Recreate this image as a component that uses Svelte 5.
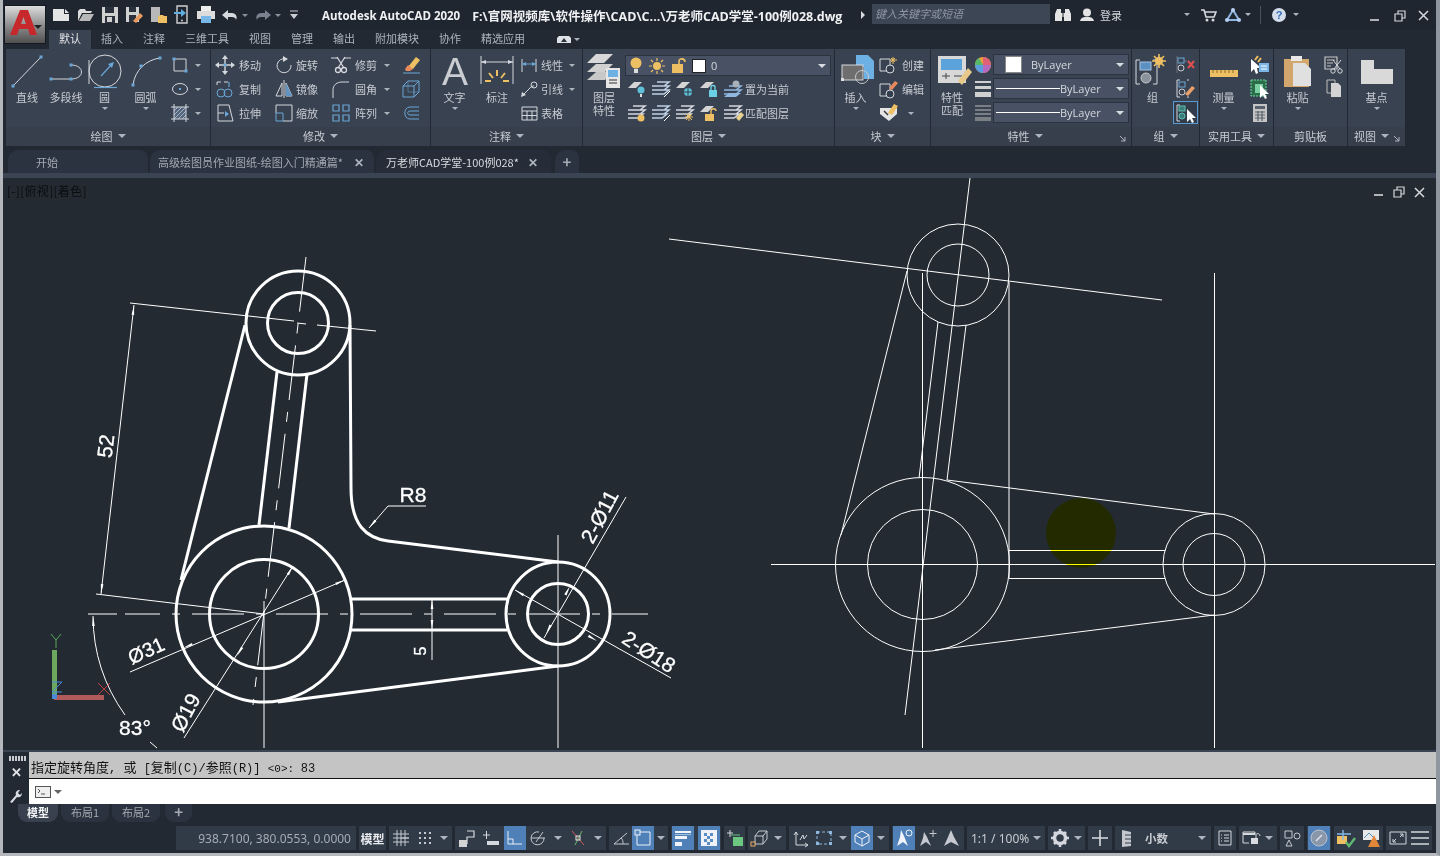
<script>
  const L = "#d5d8dd";
  const G = "#c9ccd1";
  const B = "#6aa6d6";
  const Y = "#eec063";

  const sq = (x, y, c = B) => `<rect x="${x - 1.5}" y="${y - 1.5}" width="3" height="3" fill="${c}"/>`;
  const st = (d, c = L, w = 1) => `<path d="${d}" fill="none" stroke="${c}" stroke-width="${w}"/>`;
  const fl = (d, c = L) => `<path d="${d}" fill="${c}"/>`;

  // name: [width, height, svg content]
  const icons = {
    line: [40, 36, st("M6 32 34 3") + sq(6, 32) + sq(34, 3)],
    pline: [40, 36, st("M5 25H25") + st("M25 11C39 11 39 25 25 25") + sq(5, 25) + sq(25, 25) + sq(25, 11)],
    circle: [40, 36, `<circle cx="20" cy="17" r="16" fill="none" stroke="${L}"/>` + st("M4 6V30", L) + st("M9 33.5H32", B, 1.2) + st("M16 22 27 10", B, 1.2) + fl("M29 8 23 10 27 14z", B)],
    arc: [40, 36, st("M7 31C9 16 20 6 34 4") + sq(7, 31) + sq(15, 12) + sq(34, 4)],
    rect: [18, 18, st("M3 3H15V15H3z") + sq(3, 3) + sq(15, 15, B)],
    poly: [18, 18, `<ellipse cx="9" cy="9" rx="7.5" ry="5.5" fill="none" stroke="${L}"/><rect x="8" y="8" width="2" height="2" fill="${B}"/>`],
    hatch: [18, 18, `<rect x="3" y="3" width="12" height="12" fill="#56657a"/>` + st("M3 7 7 3M3 11 11 3M3 15 15 3M7 15 15 7M11 15 15 11", "#9fb6cc") + st("M3 0V18M15 0V18M0 3H18M0 15H18")],
    move: [20, 20, st("M10 2V18M2 10H18", L, 1.4) + fl("M10 0 13 4H7zM10 20 7 16H13zM0 10 4 7V13zM20 10 16 13V7z") + `<rect x="8.5" y="8.5" width="3" height="3" fill="${B}"/>`],
    rotate: [20, 20, st("M12 4A7 7 0 1 0 17 10") + fl("M9 1 14 4 9 7z")],
    trim: [22, 20, st("M1 3H8M14 3H21", L) + st("M7 2 14 13M15 2 8 13", L, 1.3) + `<circle cx="8" cy="15" r="2.5" fill="none" stroke="${L}" stroke-width="1.3"/><circle cx="14" cy="15" r="2.5" fill="none" stroke="${L}" stroke-width="1.3"/>`],
    copy: [20, 20, st("M2 3H6M2 3V6M13 3H9") + st("M14 3V8", B, 1.2) + `<circle cx="6" cy="14" r="4" fill="none" stroke="${B}"/><circle cx="13" cy="14" r="4" fill="none" stroke="${B}"/>`],
    mirror: [20, 20, st("M8 4 2 17H8zM12 4V17H18z") + fl("M12 4V17H18z", "#5f93c2") + st("M10 1V19", L)],
    fillet: [20, 20, st("M2 19V11C2 6 6 3 11 3H18")],
    stretch: [20, 20, st("M3 2H14L18 18H3z") + st("M3 10H9") + fl("M14 11 10 8V14z", B)],
    scale: [20, 20, st("M2 2H18V18H9") + st("M2 2V10") + st("M2 10H9V18H2z", B)],
    array: [20, 20, st("M2 2H8V8H2zM12 2H18V8H12zM2 12H8V18H2zM12 12H18V18H12z", B, 1.2)],
    erase: [20, 20, `<path d="M7 12 15 2 19 5 12 14z" fill="${Y}"/><path d="M4 14 7 10 12 14 9 16H5z" fill="#e88a5c"/>` + st("M2 18H19", B)],
    solid: [20, 20, st("M2 7H13V18H2zM2 7 7 2H18V13L13 18M13 7 18 2", B) + st("M7 2V13H18", B, .5)],
    offset: [20, 20, st("M18 4H9C2 4 2 16 9 16H18", B) + st("M18 8H9C6 8 6 12 9 12H18", B)],
    atext: [36, 36, `<text x="18" y="31" text-anchor="middle" font-family="Liberation Sans" font-size="39" fill="${G}">A</text>`],
    adim: [36, 36, st("M2 2V30M34 2V30") + st("M2 8H34") + fl("M2 8 7 6V10zM34 8 29 6V10z") + st("M18 16V22M10 19 14 24M26 19 22 24M6 27H12M24 27H30", Y, 2)],
    linear: [20, 20, st("M3 4V17M17 4V17") + st("M3 9H17", B) + fl("M3 9 7 7V11zM17 9 13 7V11z", B)],
    leader: [20, 20, st("M3 17 11 9C12 7 14 7 15 7", L) + `<circle cx="15" cy="6" r="3" fill="none" stroke="${L}"/>` + fl("M2 18 3 13 7 16z")],
    table: [20, 20, st("M3 4H18V17H3zM3 8H18M3 12.5H18M8 8V17M13 8V17")],
    layers: [34, 34, fl("M9 0H26L17 9H0z", "#d8d8d8") + fl("M9 10H26L18 18H0z", "#d0d0d0") + fl("M9 18H26L18 26H0z", "#c8c8c8")
      + `<rect x="19" y="14" width="14" height="20" fill="#e6e6e6"/><rect x="21" y="16" width="10" height="7" fill="#6cb0e4"/>` + st("M22 26H30M22 29H30", "#333")],
    bulb: [14, 18, `<circle cx="7" cy="6" r="5.5" fill="${Y}"/><rect x="5" y="12" width="4" height="4" fill="#ddd"/>`],
    sun: [18, 18, `<circle cx="9" cy="9" r="4" fill="${Y}"/>` + st("M9 1V4M9 14V17M1 9H4M14 9H17M3 3 5 5M13 13 15 15M15 3 13 5M3 15 5 13", Y, 1.2)],
    lockOpen: [16, 18, `<rect x="1" y="7" width="11" height="9" fill="${Y}"/>` + st("M8 7V4C8 1 14 1 14 5", Y, 1.6)],
    lay1: [20, 18, fl("M6 2H14L8 8H0z", "#d4d4d4") + `<circle cx="13" cy="10" r="3.5" fill="#5fc0d8"/><rect x="12" y="14" width="2" height="3" fill="#ddd"/>`],
    lay2: [20, 18, st("M5 2H17L12 6H0M5 6H17L12 10H0M5 10H17L12 14H0", "#bfd0e4", 1.5) + st("M18 11 12 17", "#fff")],
    lay3: [20, 18, fl("M6 2H14L8 8H0z", "#d4d4d4") + `<circle cx="12" cy="12" r="4" fill="#5fc0d8"/>` + st("M12 8V16M8 12H16", "#2f3a48")],
    lay4: [20, 18, fl("M6 2H14L8 8H0z", "#d4d4d4") + `<rect x="9" y="10" width="8" height="7" fill="#6ad0e4"/>` + st("M11 10V7C11 5 15 5 15 7V10", "#6ad0e4", 1.4)],
    lay5: [20, 18, st("M5 6H17L12 10H0M5 10H17L12 14H0", "#8fb8e0", 1.5) + fl("M5 13H17L12 17H0z", "#8fb8e0") + `<circle cx="12" cy="4" r="3.5" fill="#a8b0ba"/>`],
    lay6: [20, 18, st("M5 2H17L12 6H0M5 6H17L12 10H0M5 10H15L10 14H0", L, 1.5) + `<circle cx="13" cy="14" r="3.5" fill="${Y}"/>`],
    lay7: [20, 18, st("M5 2H17L12 6H0M5 6H17L12 10H0M5 10H15L10 14H0", "#bfd0e4", 1.5) + st("M12 17 18 11", "#fff")],
    lay8: [20, 18, st("M5 2H17L12 6H0M5 6H17L12 10H0M5 10H15L10 14H0", L, 1.5) + st("M13 9V17M9 13H17M10 10 16 16M16 10 10 16", Y)],
    lay9: [20, 18, fl("M6 2H14L8 8H0z", "#d4d4d4") + `<rect x="5" y="10" width="9" height="7" fill="${Y}"/>` + st("M11 10V7C11 4 16 4 16 7", Y, 1.4)],
    lay10: [20, 18, st("M5 2H17L12 6H0M5 6H17L12 10H0M5 10H15L10 14H0", L, 1.5) + `<path d="M12 14 17 8 20 11 15 17z" fill="#e8d090"/>`],
    insert: [36, 30, fl("M18 1H30L36 7V25H26V13H18z", "#6cb0e4") + `<rect x="4" y="11" width="21" height="15" fill="#6e6e6e" stroke="${L}"/><circle cx="24" cy="23" r="6.5" fill="none" stroke="#c8c8c8"/><rect x="3" y="24" width="3" height="3" fill="#ddd"/>`],
    create: [22, 20, st("M2 4H12V16H2z", L) + `<circle cx="12" cy="14" r="4" fill="#343e4c" stroke="${L}"/>` + st("M15 2V9M12 5H19M13 3 17 7M17 3 13 7", Y)],
    edit: [22, 20, st("M2 5H12V17H2z", L) + `<circle cx="12" cy="15" r="4" fill="#343e4c" stroke="${L}"/>` + `<path d="M11 9 17 2 20 4 14 11z" fill="#e88a5c"/>`],
    attr: [20, 20, `<path d="M1 5H18V11L10 18 1 11z" fill="#e4e4e4"/>` + `<path d="M9 10 15 1 19 3 13 12z" fill="${Y}"/>` + st("M5 8 9 12", "#333", 1.5)],
    match: [44, 34, `<rect x="8" y="2" width="28" height="27" fill="#d8d8d8"/><rect x="11" y="5" width="21" height="11" fill="#5ca3dc"/>` + st("M12 22H20M24 22H32M16 19V25", "#444") + `<path d="M28 27 38 14 42 18 32 31z" fill="#e8c98a"/>`],
    wheel: [18, 18, `<circle cx="9" cy="9" r="8" fill="#e8a03c"/><path d="M9 9V1A8 8 0 0 1 17 9z" fill="#e0607a"/><path d="M9 9H17A8 8 0 0 1 9 17z" fill="#b66ac0"/><path d="M9 9V17A8 8 0 0 1 1 9z" fill="#5a9de0"/><path d="M9 9H1A8 8 0 0 1 5 2z" fill="#58b86a"/>`],
    weight: [18, 18, fl("M1 1H17V3H1zM1 6H17V9H1zM1 12H17V17H1z", "#d0d0d0")],
    ltype: [18, 18, st("M1 2H17M1 6H17M1 10H17M1 14H17M1 16H17", "#bcbcbc", 1.1)],
    group: [36, 36, st("M5 6H1V30H5M18 6H22V30H18") + `<rect x="5" y="8" width="11" height="8" fill="#5c8fc2" stroke="#a8c4e0"/><circle cx="11" cy="24" r="5" fill="#8a929c" stroke="#c8c8c8"/>` + st("M24 0V14M17 7H31M19 2 29 12M29 2 19 12", Y, 1.6) + `<circle cx="24" cy="7" r="4" fill="${Y}"/>`],
    ungroup: [20, 20, `<rect x="2" y="3" width="6" height="5" fill="none" stroke="${B}"/><circle cx="5" cy="13" r="3" fill="none" stroke="${G}"/>` + st("M11 6H8M1 1V18", "#8a929c", .6) + st("M12 6 18 13M18 6 12 13", "#e05050", 2)],
    gedit: [20, 20, st("M4 1H1V18H4M11 1H13M11 18H13") + `<rect x="3" y="3" width="6" height="5" fill="none" stroke="${B}"/><circle cx="6" cy="13" r="3" fill="none" stroke="${G}"/><path d="M9 15 16 7 19 9 12 17z" fill="#e8a06a"/>`],
    gsel: [20, 20, st("M4 2H1V18H4") + `<rect x="3" y="3" width="6" height="5" fill="#3d7c7a" stroke="#5ec0b0"/><circle cx="6" cy="13" r="3" fill="#3d7c7a" stroke="#5ec0b0"/>` + fl("M11 6V19L14 16 16 20 18 19 16 15H20z", "#fff")],
    measure: [30, 26, `<g transform="translate(0 13)"><rect x="1" y="3" width="28" height="7" fill="${Y}"/>` + st("M4 3V6M8 3V6M12 3V6M16 3V6M20 3V6M24 3V6", "#8a6a2a") + `</g>`],
    quick: [20, 20, fl("M1 4V17L4 14 6 19 8 18 7 13H11z", "#fff") + st("M8 1 5 5M11 3 8 7", Y, 2) + `<rect x="9" y="8" width="10" height="9" fill="#7ab6e8"/>` + st("M11 11H17M11 14H17", "#fff")],
    select: [20, 20, `<rect x="1" y="1" width="15" height="16" fill="#2c6c4a" stroke="#6adc9a" stroke-dasharray="2 1"/><rect x="5" y="5" width="8" height="9" fill="#7ad0a0"/>` + fl("M10 6V19L13 16 15 20 17 19 15 15H19z", "#fff")],
    calc: [16, 20, `<rect x="1" y="1" width="14" height="18" fill="#c4c4c4"/><rect x="3" y="3" width="10" height="3" fill="#5a626e"/>` + st("M3 9H13M3 12H13M3 15H13M6 8V18M10 8V18", "#5a626e", 1.2)],
    paste: [30, 36, `<g transform="translate(0 1)">` + fl("M1 4H26V32H1z", "#d3a66e") + fl("M8 1H19V6H8z", "#e8e8e8") + fl("M10 8H22L28 14V31H10z", "#e0e0e0") + `</g>`],
    cut: [20, 20, st("M1 2H13V14H1zM3 5H11M3 8H9M3 11H7", "#c6c6c6", 1.2) + st("M9 5 16 14M17 5 10 14", L) + `<circle cx="9" cy="16" r="2.2" fill="none" stroke="${L}"/><circle cx="16" cy="16" r="2.2" fill="none" stroke="${L}"/>`],
    copyc: [18, 20, st("M2 1H10V14H2z", "#bdbdbd") + fl("M6 4H13L16 7V18H6z", "#d4d4d4")],
    base: [34, 32, fl("M1 6H14V15H33V30H1z", "#d9d9d9")],
    launch: [8, 8, st("M1 1 6 6M6 2V6H2", "#aeb4bd")],
    fnew: [18, 14, fl("M0 1H11V6H16V13H0z", "#e4e4e4") + fl("M12 1 16 5H12z", "#e4e4e4")],
    fopen: [18, 14, fl("M1 3 3 1H8L9 3H15L14 5H5L1 13z", "#dcdcdc") + fl("M6 6H17L13 13H2z", "#b8b8b8")],
    fsave: [18, 18, fl("M1 1H17V17H1z", "#d0d0d0") + fl("M4 1H13V7H4z", "#2a313d") + fl("M4 10H14V17H4z", "#2a313d") + fl("M6 11H11V16H6z", "#d0d0d0")],
    fsaveas: [18, 18, fl("M1 1H14V16H1z", "#d0d0d0") + fl("M4 1H11V6H4z", "#2a313d") + fl("M4 9H11V16H4z", "#2a313d") + `<path d="M8 15 15 7 18 10 11 17z" fill="#e89a60"/>`],
    fplot: [18, 18, fl("M2 1H11V16H2z", "#b8b8b8") + fl("M9 11 11 9H14L15 10H18V17H9z", Y)],
    fpub: [18, 20, st("M4 1H14V18H4z", "#cfcfcf", 1.4) + st("M1 8H9", "#60aee0", 2) + fl("M8 4 13 8 8 12z", "#60aee0") + `<circle cx="9" cy="15.5" r="1" fill="#ccc"/>`],
    fprint: [20, 18, fl("M5 0H15V5H5z", "#eee") + fl("M1 5H19V13H1z", "#dcdcdc") + fl("M5 10H15V17H5z", "#78b8e8")],
    undo: [18, 12, fl("M7 1 1 6 7 11V8H11C13 8 15 9 15 11 17 7 14 4 11 4H7z", L)],
    redo: [18, 12, fl("M11 1 17 6 11 11V8H7C5 8 3 9 3 11 1 7 4 4 7 4H11z", "#7a8290")],
    custom: [10, 10, st("M1 1H9", G) + fl("M1 4H9L5 9z", G)],
    binoc: [16, 14, fl("M2 1H6V5H7V13H0V6zM10 1H14L16 6V13H9V5H10z", "#e4e4e4") + fl("M7 5H9V9H7z", "#888")],
    user: [16, 14, `<circle cx="8" cy="4.5" r="4" fill="#e4e4e4"/>` + fl("M1 13C2 9 5 9 8 9 11 9 14 9 15 13z", "#e4e4e4")],
    cart: [16, 14, st("M0 2H3L5 9H13L15 4H4", L, 1.6) + `<circle cx="6" cy="12" r="1.5" fill="${L}"/><circle cx="12" cy="12" r="1.5" fill="${L}"/>`],
    tri: [16, 14, st("M8 2 2 12H14z", "#8fb4e2", 2) + `<circle cx="8" cy="2" r="2" fill="#b5cff0"/><circle cx="2" cy="12" r="2" fill="#b5cff0"/><circle cx="14" cy="12" r="2" fill="#b5cff0"/>`],
    help: [14, 14, `<circle cx="7" cy="7" r="7" fill="#d4ddea"/><text x="7" y="11" text-anchor="middle" font-family="Liberation Sans" font-weight="700" font-size="11" fill="#3470b8">?</text>`],
    wmin: [10, 10, st("M0 8H9", L, 1.6)],
    wres: [12, 12, st("M1 4H8V11H1zM4 4V1H11V8H8", L, 1.2)],
    wclose: [11, 11, st("M1 1 10 10M10 1 1 10", L, 1.5)],
    cam: [14, 8, fl("M2 0H12L14 2V7H0V2z", "#dfe2e6") + fl("M7 2 10 6H4z", "#2b333d")],
    prompt: [16, 12, `<rect x=".5" y=".5" width="15" height="11" fill="#eee" stroke="#555"/><path d="M3 3 5 5 3 7M6 8H10" fill="none" stroke="#555"/>`],
    sgrid: [18, 18, st("M5 1V17M9 1V17M13 1V17M1 5H17M9 9H17M1 9H17M1 13H17", "#c6cad0")],
    ssnap: [18, 18, `<path d="M3 3h2v2H3zM8 3h2v2H8zM13 3h2v2h-2zM3 8h2v2H3zM8 8h2v2H8zM13 8h2v2h-2zM3 13h2v2H3zM8 13h2v2H8zM13 13h2v2h-2z" fill="#c6cad0"/>`],
    sinfer: [18, 18, st("M9 2H16V8H9V15", "#d8dbe0", 1.2) + fl("M1 11H9V18H1z", "#d4d4d4")],
    sdyn: [18, 18, st("M1 6H8M4.5 2V10", L) + fl("M5 12H17V16H5z", L)],
    sortho: [20, 18, st("M3 2V15H17", "#e8eef6") + st("M3 10H8V15", "#e8eef6")],
    spolar: [20, 18, st("M16 9A6.5 6.5 0 1 1 11 3M3 9H17M15 3 8 13", "#c6cad0")],
    sisnap: [18, 18, st("M3 2 15 16", "#d05a60") + st("M13 2 6 16", "#6ab86a") + `<rect x="7" y="7" width="4" height="4" fill="none" stroke="#e8e8e8"/>`],
    sangle: [18, 18, st("M2 15 15 4M2 15H17M9 9C11 10 11 13 11 15", "#c6cad0")],
    sosnap: [20, 18, st("M4 3H17V16H4z", "#eef2f8") + `<rect x="2" y="1" width="5" height="5" fill="#5b8cc2" stroke="#eef2f8"/>`],
    slw: [20, 18, fl("M2 2H18V4H2zM2 7H14V10H2zM2 13H9V17H2z", "#f0f4fa") + fl("M2 5.5H18V6H2z", "#fff")],
    strans: [20, 18, `<rect x="2" y="1" width="16" height="16" fill="#eef2f8"/>` + fl("M5 4H8V7H5zM11 4H14V7H11zM8 7H11V10H8zM5 10H8V13H5zM11 10H14V13H11zM8 13H11V16H8z", "#5b8cc2")],
    scycle: [20, 18, st("M5 1V8M2 4H8", L) + `<rect x="8" y="8" width="10" height="9" fill="#6cc880"/>` + st("M6 6H15", "#6cc880")],
    s3d: [20, 18, st("M5 7H13V15H5zM5 7 9 2H17V10L13 15M13 7 17 2", "#c6cad0") + `<rect x="1" y="13" width="4" height="4" fill="#343e4c" stroke="#e8a860"/>`],
    sucs: [20, 18, st("M5 16V3M5 3 3 6M5 3 7 6M5 16H17M17 16 14 14M17 16 14 18", L) + st("M9 11 12 6 13 10 16 6", "#d4d8de")],
    sgizmo: [20, 18, `<rect x="3" y="3" width="14" height="12" fill="none" stroke="#8fb8e0" stroke-dasharray="3 2"/><rect x="2" y="2" width="3" height="3" fill="#8fb8e0"/><rect x="15" y="2" width="3" height="3" fill="#8fb8e0"/><rect x="2" y="13" width="3" height="3" fill="#8fb8e0"/><rect x="15" y="13" width="3" height="3" fill="#8fb8e0"/>`],
    s3dg: [20, 18, st("M10 2 17 6V13L10 17 3 13V6zM10 10 3 6M10 10 17 6M10 10V17", "#f0f4fa")],
    sa1: [20, 20, fl("M7 2 10 8 14 18 9 14 3 18 6 9z", "#f0f4fa") + `<circle cx="15" cy="5" r="3" fill="none" stroke="#f0f4fa"/>`],
    sa2: [20, 20, fl("M6 4 9 9 13 18 8 14 2 18 5 10z", "#c6cad0") + st("M15 2V9M11.5 5.5H18.5", "#c6cad0")],
    sa3: [20, 20, fl("M9 2 12 9 17 18 9 14 2 18 6 9z", "#c6cad0")],
    sgear: [18, 18, `<circle cx="9" cy="9" r="5.5" fill="none" stroke="#d4d8de" stroke-width="3.5"/>` + st("M9 0V4M9 14V18M0 9H4M14 9H18M3 3 5.5 5.5M12.5 12.5 15 15M15 3 12.5 5.5M3 15 5.5 12.5", "#d4d8de", 2.6)],
    splus: [18, 18, st("M9 1V17M1 9H17", "#d8dbe0", 1.6)],
    sruler: [10, 18, fl("M0 1 9 3V17L0 18z", "#c4c8ce") + st("M3 6H9M3 10H9M3 14H9", "#333c49")],
    slist: [14, 18, st("M1 2H13V16H1zM3 6H4M6 6H11M3 9H4M6 9H11M3 12H4M6 12H11", L)],
    slock: [20, 18, st("M2 3H14V6M2 3V14H8", L) + st("M2 5H14", L, 2) + `<rect x="10" y="9" width="7" height="6" fill="#d8dbe0"/>` + st("M15 9V6C15 4 19 4 19 7", L)],
    sshape: [18, 18, st("M2 2H9V9H2zM6 11 9 17H3z", "#c6cad0") + `<circle cx="14" cy="7" r="3" fill="none" stroke="#c6cad0"/>`],
    sclean: [20, 20, `<circle cx="10" cy="10" r="8" fill="#8a97aa" stroke="#b8c2d0"/>` + st("M7 13 13 7", "#dfe5ec", 1.5)],
    swork: [20, 20, fl("M1 8H11V16H1z", Y) + st("M7 2V12M1 6H15", "#88b8e8", 1.4) + st("M10 14 13 18 19 10", "#60b870", 2.4)],
    swarn: [20, 20, fl("M2 2H18V12H2z", "#e8e8e8") + st("M3 10 8 5 12 9", "#5090c0") + fl("M13 7 19 19H7z", "#e08838")],
    sfull: [18, 16, st("M1 2H17V14H1z", L) + st("M4 12 7 9M4 9V12H7M14 4 11 7M14 7V4H11", L)],
    smenu: [18, 16, st("M0 2H18M0 8H18M0 14H18", L, 1.6)],
  };

  const arrow = (x, y, dx, dy, len = 10, w = 1.3) => {
    const n = Math.hypot(dx, dy);
    const ux = dx / n, uy = dy / n;
    const bx = x + ux * len, by = y + uy * len;
    return `${x},${y} ${bx - uy * w},${by + ux * w} ${bx + uy * w},${by - ux * w}`;
  };

  // arrowheads on the dimensions of the left drawing: tip and direction
  const arrows = [
    [134, 305, -33, 289], [101, 594, 33, -289],
    [345, 580, -81, 34], [183, 648, 81, -34],
    [293, 566, -29, 48], [237, 656, 29, -48],
    [432, 599, 0, 1], [432, 630, 0, -1],
    [369, 528, 19, -22],
    [570, 586, -14, 27], [546, 634, 14, -27],
    [515, 590, 40, 24], [597, 641, -40, -24],
    [93, 616, 1, 22],
  ];

  const thin = [
    "M96 594 264 614", "M134 305 101 594",
    "M130 672 345 580", "M184 738 293 566",
    "M264 601V748", "M558 535V748",
    "M432 599V660", "M369 528 388 506H426",
    "M626 497 544 638", "M671 678 515 590",
    "M93 616A172 172 0 0 0 125 715", "M150 742 157 748",
    "M130 303 294 321", "M297 323 306 324", "M317 325 376 331",
    "M88 614H117",
  ];
  const thick = [
    "M245 325 181 580",
    "M277 372 259 525", "M307 374 289 528",
    "M350 325 351 488C351 525 366 538 388 541L558 562",
    "M558 666 278 702",
    "M351 599H507", "M351 630H507",
  ];
  const rightLines = [
    "M669 239 1162 300", "M970 178 905 715",
    "M922.5 273V748", "M1214.5 273V748", "M1009 282V578",
    "M771 564.5H1435", "M1009 550.5H1165", "M1009 578.5H1165",
    "M907 271 841 535",
    "M938 322 919 478", "M966 325 947 480",
    "M947 480 1214 514", "M1214 615 935 650",
  ];
  const rightCircles = [
    [922.5, 564.5, 87], [922.5, 564.5, 55],
    [958, 275, 51], [958, 275, 31],
    [1214, 564.5, 51], [1214, 564.5, 31],
  ];
  const circlesLeft = [[264, 614, 88], [264, 614, 54.5], [298, 323, 52], [298, 323, 30.5], [558, 614, 52], [558, 614, 30.5]];

  const tabs = ["默认", "插入", "注释", "三维工具", "视图", "管理", "输出", "附加模块", "协作", "精选应用"];
</script>

{#snippet icon(n)}
  <svg class="ic" width={icons[n][0]} height={icons[n][1]} viewBox="0 0 {icons[n][0]} {icons[n][1]}">{@html icons[n][2]}</svg>
{/snippet}

{#snippet big(n, label, w, label2 = "", caret = true)}
  <div class="big" style="width:{w}px">
    <div class="big-ic">{@render icon(n)}</div>
    <div class="big-l">{label}</div>
    {#if label2}<div class="big-l">{label2}</div>{/if}
    {#if caret}<i class="caret sm"></i>{/if}
  </div>
{/snippet}

{#snippet row(n, label = "", w = 60, caret = false)}
  <div class="row" style="width:{w}px">
    <span class="row-ic">{@render icon(n)}</span>
    {#if label}<span class="row-l">{label}</span>{/if}
    {#if caret}<i class="caret sm push"></i>{/if}
  </div>
{/snippet}

{#snippet title(text, launch = false, drop = true)}
  <div class="ptitle">
    <span>{text}</span>
    {#if drop}<i class="caret"></i>{/if}
    {#if launch}<span class="launch">{@render icon("launch")}</span>{/if}
  </div>
{/snippet}

{#snippet cell(n, on = false)}
  <span class="cell" class:on>{@render icon(n)}</span>
{/snippet}

<div class="window">
  <header class="titlebar">
    <div class="logo">
      <svg width="28" height="28" viewBox="0 0 28 28">
        <path d="M0 26 10 1H18L27 26H20L18 20H9L7 26zM11 15H16L13.5 8z" fill="#c6282b"/>
      </svg>
      <i class="caret dark"></i>
    </div>
    <div class="qat">
      <span class="q">{@render icon("fnew")}</span>
      <span class="q">{@render icon("fopen")}</span>
      <span class="q">{@render icon("fsave")}</span>
      <span class="q">{@render icon("fsaveas")}</span>
      <span class="q">{@render icon("fplot")}</span>
      <span class="q">{@render icon("fpub")}</span>
      <span class="q">{@render icon("fprint")}</span>
      <span class="q">{@render icon("undo")}</span>
      <i class="caret sm q-c"></i>
      <span class="q q-r">{@render icon("redo")}</span>
      <i class="caret sm q-c"></i>
      <span class="q q-m">{@render icon("custom")}</span>
    </div>
    <div class="apptitle">
      <span>Autodesk AutoCAD 2020</span>
      <span class="path">F:\官网视频库\软件操作\CAD\C...\万老师CAD学堂-100例028.dwg</span>
    </div>
    <i class="more"></i>
    <div class="search">键入关键字或短语</div>
    <div class="tright">
      <span class="t binoc">{@render icon("binoc")}</span>
      <span class="t user">{@render icon("user")}</span>
      <span class="login">登录</span>
      <i class="caret sm t-c1"></i>
      <span class="t cart">{@render icon("cart")}</span>
      <span class="t tri">{@render icon("tri")}</span>
      <i class="caret sm t-c2"></i>
      <span class="tsep"></span>
      <span class="t help">{@render icon("help")}</span>
      <i class="caret sm t-c3"></i>
      <span class="t wmin">{@render icon("wmin")}</span>
      <span class="t wres">{@render icon("wres")}</span>
      <span class="t wclose">{@render icon("wclose")}</span>
    </div>
  </header>

  <nav class="rtabs">
    {#each tabs as t, i}
      <span class="rtab" class:active={i === 0}>{t}</span>
    {/each}
    <span class="cam">{@render icon("cam")}</span>
    <i class="caret sm"></i>
  </nav>

  <section class="ribbon">
    <div class="panel p-draw">
      <div class="pbody">
        {@render big("line", "直线", 42, "", false)}
        {@render big("pline", "多段线", 36, "", false)}
        {@render big("circle", "圆", 41)}
        {@render big("arc", "圆弧", 41)}
        <div class="col">
          {@render row("rect", "", 38, true)}
          {@render row("poly", "", 38, true)}
          {@render row("hatch", "", 38, true)}
        </div>
      </div>
      {@render title("绘图")}
    </div>

    <div class="panel p-mod">
      <div class="pbody">
        <div class="col">
          {@render row("move", "移动", 60)}
          {@render row("copy", "复制", 60)}
          {@render row("stretch", "拉伸", 60)}
        </div>
        <div class="col c-two">
          {@render row("rotate", "旋转", 56)}
          {@render row("mirror", "镜像", 56)}
          {@render row("scale", "缩放", 56)}
        </div>
        <div class="col">
          {@render row("trim", "修剪", 70, true)}
          {@render row("fillet", "圆角", 70, true)}
          {@render row("array", "阵列", 70, true)}
        </div>
        <div class="col">
          {@render row("erase", "", 30)}
          {@render row("solid", "", 30)}
          {@render row("offset", "", 30)}
        </div>
      </div>
      {@render title("修改")}
    </div>

    <div class="panel p-note">
      <div class="pbody">
        {@render big("atext", "文字", 47)}
        {@render big("adim", "标注", 38, "", false)}
        <div class="col">
          {@render row("linear", "线性", 64, true)}
          {@render row("leader", "引线", 64, true)}
          {@render row("table", "表格", 64)}
        </div>
      </div>
      {@render title("注释")}
    </div>

    <div class="panel p-layer">
      <div class="pbody">
        {@render big("layers", "图层", 42, "特性", false)}
        <div class="layercol">
          <div class="combo c-layer">
            {@render icon("bulb")}
            {@render icon("sun")}
            {@render icon("lockOpen")}
            <span class="swatch"></span>
            <span class="combo-t">0</span>
            <i class="caret push lt"></i>
          </div>
          <div class="lrow">
            {@render icon("lay1")}{@render icon("lay2")}{@render icon("lay3")}{@render icon("lay4")}{@render icon("lay5")}
            <span class="row-l">置为当前</span>
          </div>
          <div class="lrow">
            {@render icon("lay6")}{@render icon("lay7")}{@render icon("lay8")}{@render icon("lay9")}{@render icon("lay10")}
            <span class="row-l">匹配图层</span>
          </div>
        </div>
      </div>
      {@render title("图层")}
    </div>

    <div class="panel p-block">
      <div class="pbody">
        {@render big("insert", "插入", 41)}
        <div class="col">
          {@render row("create", "创建", 54)}
          {@render row("edit", "编辑", 54)}
          {@render row("attr", "", 54, true)}
        </div>
      </div>
      {@render title("块")}
    </div>

    <div class="panel p-prop">
      <div class="pbody">
        {@render big("match", "特性", 42, "匹配", false)}
        <div class="col propic">
          {@render row("wheel", "", 20)}
          {@render row("weight", "", 20)}
          {@render row("ltype", "", 20)}
        </div>
        <div class="propcol">
          <div class="combo c-prop">
            <span class="swatch lg"></span>
            <span class="combo-t by">ByLayer</span>
            <i class="caret push lt"></i>
          </div>
          <div class="combo c-prop">
            <span class="ln"></span>
            <span class="combo-t">ByLayer</span>
            <i class="caret push lt"></i>
          </div>
          <div class="combo c-prop">
            <span class="ln"></span>
            <span class="combo-t">ByLayer</span>
            <i class="caret push lt"></i>
          </div>
        </div>
      </div>
      {@render title("特性", true)}
    </div>

    <div class="panel p-group">
      <div class="pbody">
        {@render big("group", "组", 41, "", false)}
        <div class="col">
          {@render row("ungroup", "", 26)}
          {@render row("gedit", "", 26)}
          <div class="hl">{@render icon("gsel")}</div>
        </div>
      </div>
      {@render title("组")}
    </div>

    <div class="panel p-util">
      <div class="pbody">
        {@render big("measure", "测量", 47)}
        <div class="col">
          {@render row("quick", "", 25)}
          {@render row("select", "", 25)}
          {@render row("calc", "", 25)}
        </div>
      </div>
      {@render title("实用工具")}
    </div>

    <div class="panel p-clip">
      <div class="pbody">
        {@render big("paste", "粘贴", 47)}
        <div class="col">
          {@render row("cut", "", 25)}
          {@render row("copyc", "", 25)}
        </div>
      </div>
      {@render title("剪贴板", false, false)}
    </div>

    <div class="panel p-view">
      <div class="pbody">
        {@render big("base", "基点", 57)}
      </div>
      {@render title("视图", true)}
    </div>
  </section>

  <div class="doctabs">
    <div class="dtab d1"><span>开始</span></div>
    <div class="dtab d2"><span>高级绘图员作业图纸-绘图入门精通篇*</span><b>✕</b></div>
    <div class="dtab d3"><span>万老师CAD学堂-100例028*</span><b>✕</b></div>
    <div class="dtab d4"><span>+</span></div>
  </div>
  <div class="band"></div>

  <main class="canvas">
    <svg class="draw" width="1433" height="572" viewBox="3 178 1433 572">
      <rect x="3" y="178" width="1433" height="572" fill="#232a32"/>
      <g fill="none" stroke="#fff">
        {#each thin as d}<path {d}/>{/each}
        <path d="M125 614H648" stroke-dasharray="52 12 8 12" stroke-dashoffset="17"/>
        <path d="M306 257 253 705" stroke-dasharray="55 12 10 12"/>
        {#each circlesLeft as c}<circle cx={c[0]} cy={c[1]} r={c[2]} stroke-width="3"/>{/each}
        {#each thick as d}<path {d} stroke-width="3"/>{/each}
        {#each rightLines as d}<path {d}/>{/each}
        {#each rightCircles as c}<circle cx={c[0]} cy={c[1]} r={c[2]}/>{/each}
      </g>
      {#each arrows as a}
        <polygon points={arrow(a[0], a[1], a[2], a[3])} fill="#fff"/>
      {/each}

      <g class="dim">
        <text transform="translate(113 447) rotate(-83)" text-anchor="middle">52</text>
        <text x="413" y="502" text-anchor="middle">R8</text>
        <text x="135" y="735" text-anchor="middle">83°</text>
        <text class="narrow" transform="translate(149 657) rotate(-24)" text-anchor="middle">Ø31</text>
        <text transform="translate(192 716) rotate(-62)" text-anchor="middle">Ø19</text>
        <text transform="translate(606 520) rotate(-62)" text-anchor="middle">2-Ø11</text>
        <text transform="translate(645 658) rotate(33)" text-anchor="middle">2-Ø18</text>
        <text class="five" transform="translate(426 651) rotate(-90)" text-anchor="middle">5</text>
      </g>

      <path d="M56 640V648M51 634 56 640 61 634" fill="none" stroke="#5ca85c"/>
      <rect x="52" y="650" width="5" height="47" fill="#6ca85e"/>
      <rect x="54" y="695" width="50" height="5" fill="#b05a5c"/>
      <path d="M98 683 110 695M110 683 98 695" fill="none" stroke="#c04040"/>
      <path d="M52 682H62L52 692H62" fill="none" stroke="#4a8ad8"/>
      <rect x="52" y="694" width="5" height="5" fill="#4a8ad8"/>

      <circle class="click" cx="1081" cy="533" r="35"/>
    </svg>
    <div class="vplabel">[-][俯视][着色]</div>
    <div class="vpctl">
      {@render icon("wmin")}
      {@render icon("wres")}
      {@render icon("wclose")}
    </div>
  </main>

  <div class="sep"></div>

  <section class="cmd">
    <div class="cmdside">
      <span class="grip"></span>
      <span class="cmdx">✕</span>
      <svg width="14" height="14" viewBox="0 0 14 14" class="wrench">
        <path d="M1 13 7 6C6 3 8 1 11 1L9 4 11 6 13 4C13 7 11 9 8 8L3 14z" fill="#d8dbe0"/>
      </svg>
    </div>
    <div class="cmdmain">
      <div class="history"><span class="cj">指定旋转角度</span>, <span class="cj">或</span> [<span class="cj">复制</span>(C)/<span class="cj">参照</span>(R)] <span class="lt0">&lt;0&gt;:&nbsp; </span>83</div>
      <div class="input">
        {@render icon("prompt")}
        <i class="caret dark2"></i>
      </div>
    </div>
  </section>

  <div class="ltabs">
    <span class="ltab current">模型</span>
    <span class="ltab">布局1</span>
    <span class="ltab">布局2</span>
    <span class="ltab plus">+</span>
  </div>

  <footer class="status">
    <div class="seg coords">938.7100, 380.0553, 0.0000</div>
    <div class="seg txt">模型</div>
    <div class="seg s-c">{@render cell("sgrid")}{@render cell("ssnap")}<i class="caret c"></i></div>
    <div class="seg s-d">
      {@render cell("sinfer")}{@render cell("sdyn")}{@render cell("sortho", true)}
      {@render cell("spolar")}<i class="caret c"></i>{@render cell("sisnap")}<i class="caret c"></i>
    </div>
    <div class="seg s-e">{@render cell("sangle")}{@render cell("sosnap", true)}<i class="caret c"></i></div>
    <div class="seg s-f">{@render cell("slw", true)}{@render cell("strans", true)}</div>
    <div class="seg s-g">{@render cell("scycle")}</div>
    <div class="seg s-h">{@render cell("s3d")}<i class="caret c"></i></div>
    <div class="seg s-i">
      {@render cell("sucs")}{@render cell("sgizmo")}<i class="caret c"></i>{@render cell("s3dg", true)}<i class="caret c"></i>
    </div>
    <div class="seg s-j">{@render cell("sa1", true)}{@render cell("sa2")}{@render cell("sa3")}</div>
    <div class="seg scale">1:1 / 100%<i class="caret c"></i></div>
    <div class="seg s-l">{@render cell("sgear")}<i class="caret c"></i></div>
    <div class="seg s-m">{@render cell("splus")}</div>
    <div class="seg units">{@render cell("sruler")}<span class="utext">小数</span><i class="caret c push"></i></div>
    <div class="seg s-o">{@render cell("slist")}</div>
    <div class="seg s-p">{@render cell("slock")}<i class="caret c"></i></div>
    <div class="seg s-m">{@render cell("sshape")}</div>
    <div class="seg s-m">{@render cell("sclean", true)}</div>
    <div class="seg s-s">{@render cell("swork")}{@render cell("swarn")}</div>
    <div class="seg s-t">{@render cell("sfull")}{@render cell("smenu")}</div>
  </footer>
</div>

<style>
  :global(body) {
    margin: 0;
    background: #232a32;
  }

  .window {
    box-sizing: border-box;
    width: 1440px;
    height: 856px;
    display: flex;
    flex-direction: column;
    background: #222933;
    border-left: 3px solid #b4b8bd;
    border-right: 4px solid #8e96a0;
    border-bottom: 3px solid #b4b8bd;
    padding-bottom: 3px;
    color: #c8ccd2;
    font: 11px "Noto Sans CJK SC", sans-serif;
    overflow: hidden;
    position: relative;
  }

  .ic {
    display: block;
    flex: none;
    overflow: visible;
  }

  .caret {
    display: inline-block;
    flex: none;
    width: 0;
    height: 0;
    border-left: 4px solid transparent;
    border-right: 4px solid transparent;
    border-top: 4px solid #aeb4bd;
  }

  .caret.sm {
    border-left-width: 3px;
    border-right-width: 3px;
    border-top-width: 3px;
  }

  .caret.lt {
    border-top-color: #d8dbe0;
    margin-right: 4px;
  }

  .push {
    margin-left: auto;
  }

  /* title bar */
  .titlebar {
    height: 30px;
    flex: none;
    display: flex;
    align-items: center;
    padding-left: 47px;
    background: #1f2630;
  }

  .logo {
    position: absolute;
    left: 1px;
    top: 5px;
    width: 42px;
    height: 39px;
    box-sizing: border-box;
    border: 1px solid #141820;
    background: linear-gradient(#dcdcdc, #8a8a8a 55%, #505050);
    padding: 3px 0 0 5px;
    z-index: 2;
  }

  .caret.dark {
    position: absolute;
    right: 3px;
    top: 19px;
    border-top-color: #222;
  }

  .qat {
    display: flex;
    align-items: center;
    width: 272px;
    flex: none;
  }

  .q {
    width: 24px;
    display: flex;
    justify-content: center;
    flex: none;
  }

  .q-c {
    margin: 0 3px 0 0;
    border-top-color: #8a92a0;
  }

  .q-m {
    margin-left: -2px;
  }

  .apptitle {
    width: 536px;
    flex: none;
    color: #f0f1f3;
    font: 700 11.5px "Open Sans", "Noto Sans CJK SC", sans-serif;
    white-space: nowrap;
    display: flex;
    align-items: center;
  }

  .path {
    margin-left: 12px;
    font-size: 12.5px;
  }

  .more {
    flex: none;
    width: 0;
    height: 0;
    margin-left: 3px;
    border-top: 4px solid transparent;
    border-bottom: 4px solid transparent;
    border-left: 4px solid #d8dbe0;
  }

  .search {
    flex: none;
    width: 178px;
    height: 20px;
    margin-left: 7px;
    margin-top: -2px;
    padding-left: 3px;
    box-sizing: border-box;
    line-height: 18px;
    background: #3d4655;
    color: #8f97a3;
    font-style: italic;
  }

  .tright {
    display: flex;
    align-items: center;
    flex: 1;
    height: 100%;
    position: relative;
    margin-top: -1px;
  }

  .t {
    display: block;
    flex: none;
  }

  .binoc { margin-left: 5px; }
  .user { margin-left: 8px; }
  .login { margin-left: 5px; color: #d4d7dc; }
  .t-c1 { margin-left: 62px; }
  .cart { margin-left: 11px; }
  .tri { margin-left: 8px; }
  .t-c2 { margin-left: 4px; }
  .tsep { width: 1px; height: 18px; background: #4a5260; margin-left: 9px; }
  .help { margin-left: 11px; }
  .t-c3 { margin-left: 7px; }
  .wmin { margin-left: 71px; margin-top: 4px; }
  .wres { margin-left: 14px; margin-top: 2px; }
  .wclose { margin-left: 12px; margin-top: 2px; }

  /* ribbon tabs */
  .rtabs {
    height: 19px;
    flex: none;
    display: flex;
    align-items: center;
    padding-left: 46px;
    background: #222933;
  }

  .rtab {
    padding: 0 10px;
    height: 19px;
    line-height: 17px;
    color: #aeb4bd;
  }

  .rtab.active {
    background: #3a4352;
    color: #e2e4e8;
  }

  .cam {
    margin-left: 22px;
    margin-right: 3px;
  }

  /* ribbon */
  .ribbon {
    height: 97px;
    flex: none;
    display: flex;
    gap: 1px;
    padding-left: 3px;
  }

  .panel {
    display: flex;
    flex-direction: column;
    background: #394251;
    flex: none;
  }

  .p-draw { width: 204px; }
  .p-mod { width: 219px; }
  .p-note { width: 151px; }
  .p-layer { width: 251px; }
  .p-block { width: 95px; }
  .p-prop { width: 200px; }
  .p-group { width: 67px; }
  .p-util { width: 73px; }
  .p-clip { width: 73px; }
  .p-view { width: 57px; }

  .pbody {
    height: 78px;
    display: flex;
    flex: none;
  }

  .ptitle {
    flex: 1;
    display: flex;
    align-items: center;
    justify-content: center;
    gap: 5px;
    position: relative;
    color: #c8ccd2;
    background: #373f4d;
    font-size: 11px;
    padding-bottom: 2px;
  }

  .p-prop .ptitle { padding-right: 12px; }
  .p-view .ptitle { padding-right: 10px; }

  .launch {
    position: absolute;
    right: 4px;
    bottom: 3px;
  }

  .big {
    flex: none;
    display: flex;
    flex-direction: column;
    align-items: center;
  }

  .big-ic {
    height: 37px;
    padding-top: 5px;
    box-sizing: border-box;
    display: flex;
    align-items: flex-start;
  }

  .big-l {
    height: 13px;
    line-height: 13px;
    white-space: nowrap;
    color: #c8ccd2;
  }

  .big .big-ic + .big-l {
    margin-top: 5px;
  }

  .big .caret {
    margin-top: 3px;
  }

  .col {
    display: flex;
    flex-direction: column;
    padding-top: 4px;
    flex: none;
  }

  .row {
    height: 24px;
    display: flex;
    align-items: center;
    flex: none;
  }

  .row-ic {
    width: 28px;
    display: flex;
    justify-content: center;
    flex: none;
  }

  .row-l {
    color: #c8ccd2;
    white-space: nowrap;
  }

  .p-draw .row .caret, .p-mod .row .caret {
    margin-right: 7px;
  }

  .c-two .row-ic { width: 25px; }

  .p-note .row-ic { width: 25px; }
  .p-note .row .caret { margin-right: 5px; }

  .p-draw .row-ic { width: 20px; margin-left: 0; }
  .p-draw .col { margin-left: 4px; }

  .p-group .row-ic, .p-util .row-ic, .p-clip .row-ic { width: 100%; }

  .propic .row-ic { width: 20px; }

  .p-block .row-ic { width: 26px; }

  .p-block .row .caret { margin-right: 14px; margin-left: 6px; }

  .hl {
    width: 23px;
    height: 21px;
    border: 1px solid #5a9ad0;
    background: #323b49;
    display: flex;
    align-items: center;
    justify-content: center;
  }

  .layercol {
    flex: 1;
    padding: 6px 3px 0 0;
    display: flex;
    flex-direction: column;
  }

  .combo {
    height: 21px;
    box-sizing: border-box;
    display: flex;
    align-items: center;
    background: #485264;
    border: 1px solid #2b333f;
    color: #d4d7dc;
    flex: none;
  }

  .c-layer {
    gap: 5px;
    padding-left: 3px;
    margin-bottom: 1px;
  }

  .swatch {
    width: 12px;
    height: 12px;
    background: #fff;
    border: 1px solid #222;
    flex: none;
  }

  .swatch.lg {
    width: 15px;
    height: 15px;
    margin-left: 11px;
    border-color: #888;
  }

  .combo-t {
    font-size: 11px;
    font-family: "Open Sans", sans-serif;
  }

  .by {
    margin-left: 9px;
  }

  .lrow {
    height: 24px;
    display: flex;
    align-items: center;
    gap: 4px;
    padding-left: 3px;
  }

  .lrow .row-l {
    margin-left: -3px;
  }

  .propcol {
    display: flex;
    flex-direction: column;
    gap: 3px;
    width: 136px;
    padding-top: 5px;
  }

  .ln {
    width: 64px;
    height: 1px;
    background: #fff;
    margin-left: 2px;
    flex: none;
  }

  /* document tabs */
  .doctabs {
    height: 23px;
    margin-top: 4px;
    flex: none;
    display: flex;
    align-items: stretch;
    padding-left: 5px;
    gap: 2px;
  }

  .dtab {
    display: flex;
    align-items: center;
    justify-content: space-between;
    background: #2b3340;
    color: #a4aab3;
    border-radius: 10px 8px 0 0;
    box-sizing: border-box;
    white-space: nowrap;
  }

  .dtab b {
    font-weight: 700;
    font-size: 12px;
    color: #aeb4bd;
  }

  .d1 { width: 140px; padding-left: 28px; }
  .d2 { width: 224px; padding: 0 10px 0 8px; }
  .d3 { width: 175px; padding: 0 13px 0 10px; background: #262d38; color: #d8dbe0; }
  .d4 { width: 24px; margin-left: 2px; justify-content: center; font-size: 15px; font-weight: 700; }

  .band {
    height: 5px;
    flex: none;
    background: #3a4452;
  }

  /* model space */
  .canvas {
    flex: 1;
    min-height: 0;
    position: relative;
    background: #232a32;
  }

  .draw {
    display: block;
  }

  .dim text {
    font: 21px "Liberation Sans", sans-serif;
    fill: #fff;
    stroke: #fff;
    stroke-width: .3;
  }

  .dim .five {
    font-size: 16px;
  }

  .dim .narrow {
    font-size: 20px;
  }

  .click {
    fill: #ffff00;
    mix-blend-mode: multiply;
  }

  .vplabel {
    position: absolute;
    left: 4px;
    top: 4px;
    color: #0a0d10;
    font-size: 12px;
    letter-spacing: .3px;
  }

  .vpctl {
    position: absolute;
    right: 11px;
    top: 8px;
    display: flex;
    gap: 9px;
    align-items: center;
  }

  .sep {
    height: 2px;
    flex: none;
    background: #3a4452;
  }

  /* command line */
  .cmd {
    height: 52px;
    flex: none;
    display: flex;
  }

  .cmdside {
    width: 26px;
    flex: none;
    display: flex;
    flex-direction: column;
    align-items: center;
    background: #222933;
  }

  .grip {
    width: 17px;
    height: 5px;
    margin-top: 4px;
    background: repeating-linear-gradient(90deg, #c8ccd2 0 2px, transparent 2px 3px);
    margin-left: 2px;
  }

  .cmdx {
    font-size: 13px;
    line-height: 13px;
    margin-top: 4px;
    font-weight: 700;
    color: #e2e4e8;
  }

  .wrench {
    margin-top: 11px;
  }

  .cmdmain {
    flex: 1;
    display: flex;
    flex-direction: column;
  }

  .history {
    height: 27px;
    box-sizing: border-box;
    padding: 9px 0 0 2px;
    background: #c4c4c4;
    color: #141414;
    font: 12px/16px "Liberation Mono", "Noto Sans CJK SC", monospace;
    border-bottom: 1px solid #111;
    white-space: pre;
  }

  .cj {
    font-size: 13px;
  }

  .lt0 {
    font-size: 11px;
  }

  .input {
    flex: 1;
    background: #fff;
    display: flex;
    align-items: center;
    gap: 3px;
    padding-left: 6px;
  }

  .caret.dark2 {
    border-top-color: #666;
  }

  /* layout tabs */
  .ltabs {
    height: 20px;
    flex: none;
    display: flex;
    padding-left: 15px;
    gap: 3px;
    background: #222933;
  }

  .ltab {
    height: 18px;
    line-height: 16px;
    background: #2b3340;
    color: #a4aab3;
    padding: 0 10px;
    border-radius: 0 0 9px 9px;
    font-size: 11px;
  }

  .ltab.current {
    background: #39414f;
    color: #f0f1f3;
    font-weight: 700;
    padding: 0 9px;
  }

  .plus {
    font-size: 15px;
    font-weight: 700;
    padding: 0 9px;
    margin-left: 2px;
  }

  /* status bar */
  .status {
    height: 24px;
    margin-top: 2px;
    flex: none;
    display: flex;
    padding-left: 173px;
    gap: 3px;
  }

  .seg {
    display: flex;
    align-items: center;
    justify-content: space-between;
    background: #313a47;
    padding: 0 1px;
    flex: none;
    box-sizing: border-box;
    color: #c8ccd2;
  }

  .s-c { width: 63px; }
  .s-d { width: 151px; }
  .s-e { width: 59px; }
  .s-f { width: 50px; }
  .s-g { width: 21px; justify-content: center; }
  .s-h { width: 38px; }
  .s-i { width: 100px; }
  .s-j { width: 72px; }
  .s-l { width: 37px; }
  .s-m { width: 24px; }
  .s-o { width: 22px; justify-content: center; }
  .s-p { width: 38px; }
  .s-s { width: 49px; }
  .s-t { width: 46px; }

  .coords {
    width: 180px;
    justify-content: flex-end;
    padding-right: 5px;
    color: #a5acb6;
    font: 12px "Noto Sans", sans-serif;
  }

  .txt {
    width: 27px;
    justify-content: center;
    font-weight: 700;
    font-size: 12px;
    color: #e8eaee;
  }

  .cell {
    width: 22px;
    height: 24px;
    display: flex;
    align-items: center;
    justify-content: center;
    flex: none;
  }

  .cell.on {
    background: #4f80b8;
  }

  .caret.c {
    margin: 0 3px;
  }

  .caret.c.push {
    margin: 0 4px 0 auto;
  }

  .scale {
    width: 78px;
    padding-left: 4px;
    font: 12px "Noto Sans", sans-serif;
    white-space: nowrap;
  }

  .units {
    width: 96px;
    justify-content: flex-start;
    gap: 7px;
  }

  .utext {
    font-size: 11.5px;
    font-weight: 700;
  }
</style>
